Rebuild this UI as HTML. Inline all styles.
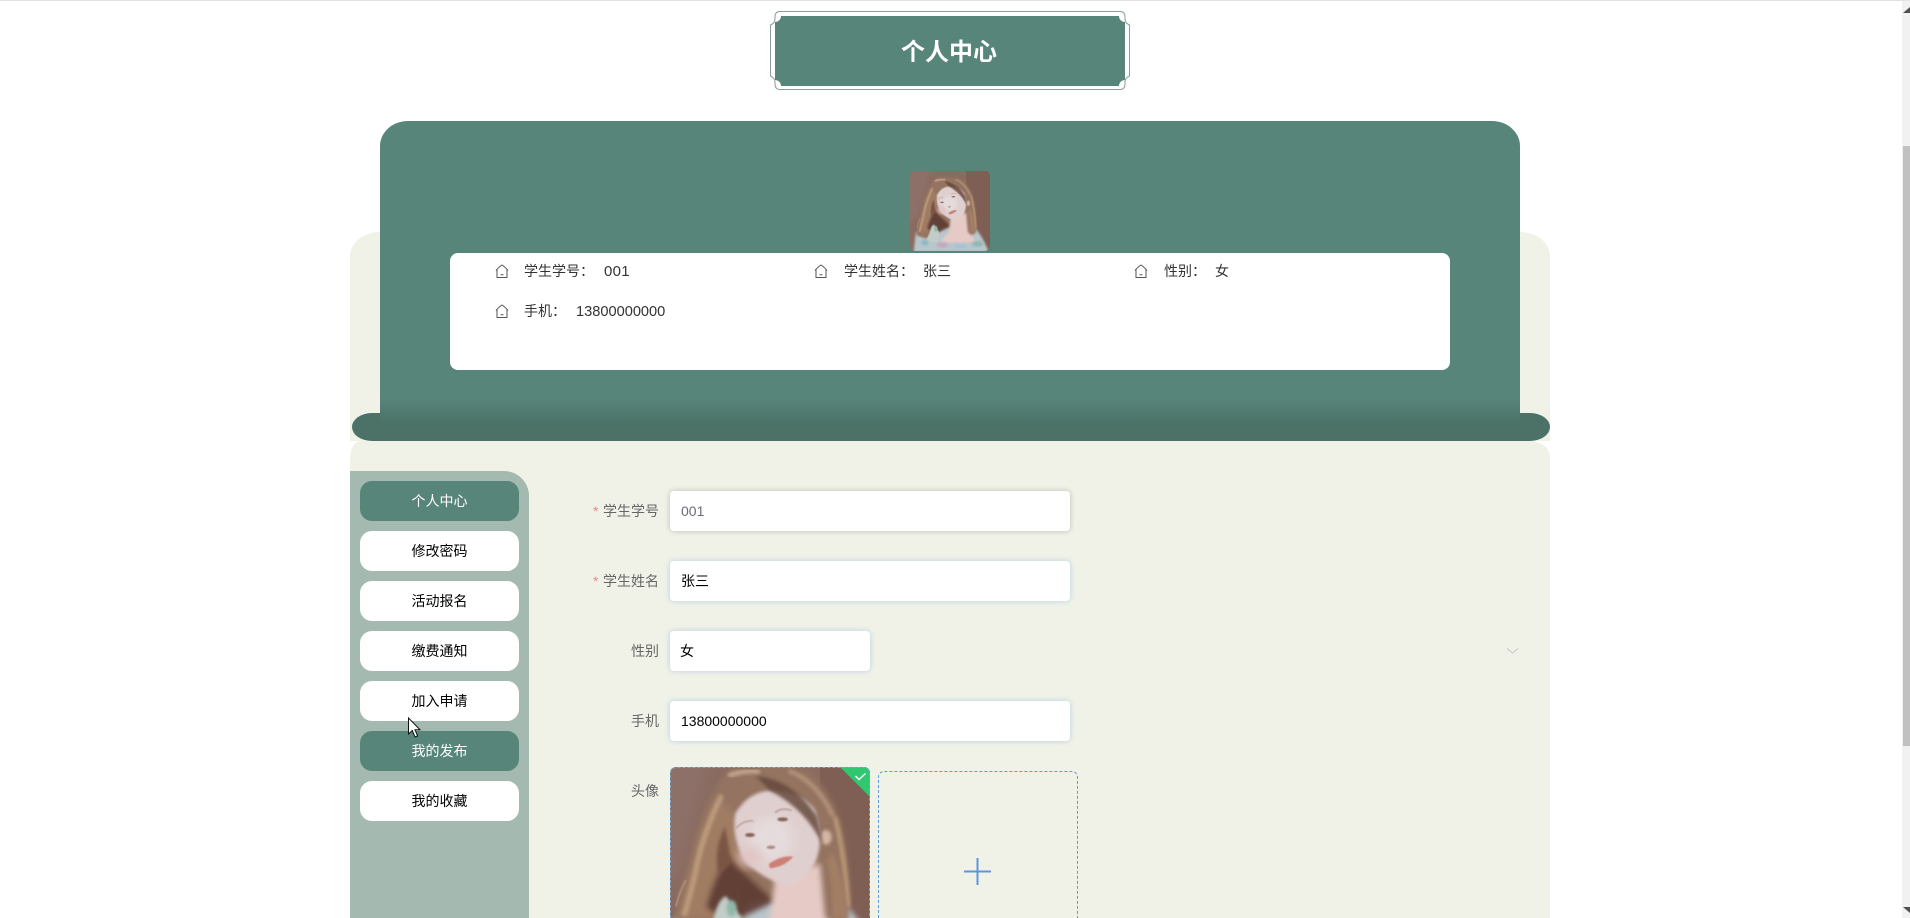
<!DOCTYPE html>
<html lang="zh-CN">
<head>
<meta charset="utf-8">
<title>个人中心</title>
<style>
html,body{margin:0;padding:0;width:1910px;height:918px;overflow:hidden;background:#fff;}
body{position:relative;font-family:"Liberation Sans","Noto Sans CJK SC",sans-serif;font-size:14px;color:#333;}
.a{position:absolute;}
.t{position:absolute;white-space:nowrap;line-height:20px;height:20px;}
.info{color:#333;letter-spacing:.3px;}
.nav{position:absolute;left:360px;width:159px;height:40px;border-radius:12px;background:#fff;color:#000;text-align:center;line-height:40px;font-size:14px;}
.nav.on{background:#58857a;color:#fff;}
.lab{position:absolute;right:1251px;color:#666;white-space:nowrap;line-height:20px;}
.star{position:absolute;left:593px;color:#e08a8a;line-height:20px;}
.inp{position:absolute;left:670px;width:400px;height:40px;background:#fff;border-radius:4px;box-shadow:0 0 6px rgba(90,150,210,.38);line-height:40px;color:#000;box-sizing:border-box;padding-left:11px;}
</style>
</head>
<body>
<div class="a" style="left:0;top:0;width:1910px;height:1px;background:#e2e2e2"></div>

<!-- title -->
<svg class="a" style="left:770px;top:11px" width="360" height="80" viewBox="0 0 360 80">
<path d="M10 .5H350Q355 .5 355 6V8Q355 12 359.500 14V65Q355 67 355 71V73Q355 78.500 350 78.500H10Q5 78.500 5 73V71Q5 67 .5 65V14Q5 12 5 8V6Q5 .5 10 .5Z" fill="#fff" stroke="#8b9c99" stroke-width="1"/>
<path d="M11 5H349A6 6 0 0 0 355 11V69A6 6 0 0 0 349 75H11A6 6 0 0 0 5 69V11A6 6 0 0 0 11 5Z" fill="#58857a"/>
</svg>
<div class="t" style="left:901px;top:37px;width:96px;height:32px;line-height:32px;font-size:24px;font-weight:bold;color:#fff;text-align:center">个人中心</div>

<!-- back panels -->
<div class="a" style="left:350px;top:232px;width:1200px;height:209px;background:#f0f2e8;border-radius:30px 30px 0 0/24px 24px 0 0"></div>
<div class="a" style="left:350px;top:441px;width:1200px;height:477px;background:#f0f2e8;border-radius:10px 20px 0 0/18px 16px 0 0"></div>
<div class="a" style="left:352px;top:413px;width:1198px;height:28px;background:#4c7268;border-radius:20px/14px"></div>
<div class="a" style="left:380px;top:121px;width:1140px;height:320px;border-radius:28px 28px 0 0/25px 25px 0 0;background:linear-gradient(to bottom,#58857a 0,#58857a 276px,#4c7268 302px,#4c7268 100%)"></div>

<!-- shared picture -->
<svg width="0" height="0" style="position:absolute">
<defs>
<filter id="b2" x="-30%" y="-30%" width="160%" height="160%"><feGaussianBlur stdDeviation="2.500"/></filter>
<filter id="b5" x="-30%" y="-30%" width="160%" height="160%"><feGaussianBlur stdDeviation="5"/></filter>
<filter id="b8" x="-30%" y="-30%" width="160%" height="160%"><feGaussianBlur stdDeviation="9"/></filter>
<filter id="b14" x="-30%" y="-30%" width="160%" height="160%"><feGaussianBlur stdDeviation="14"/></filter>
<g id="scene">
<rect x="-60" y="-80" width="800" height="780" fill="#8a6b60"/>
<rect x="480" y="-80" width="260" height="780" fill="#7f5e53"/>
<path d="M-60 -80H170L60 330L-60 430Z" fill="#8d7067" filter="url(#b14)"/>
<!-- light dress -->
<path d="M40 480Q200 410 330 420L560 440Q620 500 680 640H20Z" fill="#b9c6cc" filter="url(#b8)"/>
<!-- hair base -->
<path d="M215 25Q330 5 440 35Q530 100 555 250Q575 370 565 480L470 520L300 400L140 530L45 500Q60 380 100 270Q130 110 215 25Z" fill="#947360" filter="url(#b8)"/>
<path d="M170 110Q110 220 95 320Q70 400 55 474L250 474L260 200Z" fill="#a07c64" filter="url(#b8)"/>
<!-- highlights -->
<path d="M205 48Q255 28 300 35" fill="none" stroke="#c9ae96" stroke-width="16" opacity=".8" filter="url(#b5)"/>
<path d="M385 32Q470 62 520 170" fill="none" stroke="#bd9d84" stroke-width="14" opacity=".7" filter="url(#b5)"/>
<path d="M525 170Q555 290 565 440" fill="none" stroke="#c4a27c" stroke-width="14" opacity=".75" filter="url(#b5)"/>
<path d="M185 105Q125 230 108 330Q92 400 72 468" fill="none" stroke="#c8a985" stroke-width="16" opacity=".7" filter="url(#b5)"/>
<path d="M78 360Q56 400 48 440" fill="none" stroke="#dcc8a8" stroke-width="3" opacity=".7" filter="url(#b2)"/>
<path d="M500 300Q522 390 515 474L560 474Q560 380 520 280Z" fill="#a27e65" filter="url(#b5)"/>
<!-- dark lower hair -->
<path d="M205 290Q165 350 140 440Q180 480 250 470L345 425Q270 360 205 290Z" fill="#5d3b33" opacity=".92" filter="url(#b8)"/>
<path d="M195 200Q160 270 175 340L215 310Z" fill="#7a5445" filter="url(#b5)"/>
<!-- neck and chest -->
<path d="M345 355L480 310L495 470L580 560H250L330 470Z" fill="#e6cac5" filter="url(#b8)"/>
<!-- face -->
<path d="M226 160Q270 88 345 92Q425 98 465 150Q495 240 465 310Q430 372 385 380Q320 362 262 312Q212 240 226 160Z" fill="#e0cfcf" filter="url(#b5)"/>
<ellipse cx="335" cy="235" rx="65" ry="65" fill="#e5dbdc" filter="url(#b14)"/>
<ellipse cx="270" cy="290" rx="35" ry="28" fill="#e2c5c4" filter="url(#b14)"/>
<ellipse cx="498" cy="232" rx="17" ry="22" fill="#d3b5a3" filter="url(#b5)"/>
<!-- fringe -->
<path d="M288 48Q400 60 470 168Q482 215 488 255Q440 150 330 92Z" fill="#66493d" opacity=".85" filter="url(#b5)"/>
<!-- brows / eyes / nose / lips -->
<path d="M228 205Q250 180 280 183" fill="none" stroke="#b09590" stroke-width="4" filter="url(#b2)"/>
<path d="M345 158Q368 140 395 152" fill="none" stroke="#b09590" stroke-width="4" filter="url(#b2)"/>
<ellipse cx="270" cy="225" rx="15" ry="6" fill="#866659" filter="url(#b2)"/>
<ellipse cx="368" cy="178" rx="16" ry="6" fill="#866659" filter="url(#b2)"/>
<ellipse cx="333" cy="262" rx="13" ry="5" fill="#ad8a80" filter="url(#b2)"/>
<path d="M326 312Q365 285 400 290Q375 320 330 325Z" fill="#cd8076" filter="url(#b2)"/>
<!-- dress detail -->
<path d="M160 480Q172 420 198 408L245 474L230 560H120Z" fill="#c2ccc8" filter="url(#b5)"/>
<ellipse cx="215" cy="445" rx="15" ry="24" fill="#8fb8a9" filter="url(#b5)"/>
<ellipse cx="120" cy="560" rx="34" ry="24" fill="#8fb7c6" filter="url(#b8)"/>
<ellipse cx="430" cy="590" rx="60" ry="24" fill="#a9c3d4" filter="url(#b8)"/>
<ellipse cx="270" cy="580" rx="50" ry="24" fill="#c5a8bc" filter="url(#b8)"/>
<ellipse cx="580" cy="570" rx="50" ry="24" fill="#8fb7b4" filter="url(#b8)"/>
</g>
</defs>
</svg>

<!-- avatar -->
<div class="a" style="left:910px;top:171px;width:80px;height:80px;border-radius:5px;overflow:hidden">
<svg width="80" height="80" viewBox="-11 -37 700 667" preserveAspectRatio="none" style="display:block"><use href="#scene"/></svg>
</div>

<!-- info card -->
<div class="a" style="left:450px;top:253px;width:1000px;height:117px;background:#fff;border-radius:8px"></div>
<svg class="a" style="left:495px;top:264px" width="14" height="15" viewBox="0 0 14 15"><path d="M1 6.500Q4.500 2.500 7 1Q9.500 2.500 13 6.500M2 5.500V13.500H12V5.500M5.500 10.800H8.500" fill="none" stroke="#555" stroke-width="1"/></svg>
<svg class="a" style="left:814px;top:264px" width="14" height="15" viewBox="0 0 14 15"><path d="M1 6.500Q4.500 2.500 7 1Q9.500 2.500 13 6.500M2 5.500V13.500H12V5.500M5.500 10.800H8.500" fill="none" stroke="#555" stroke-width="1"/></svg>
<svg class="a" style="left:1134px;top:264px" width="14" height="15" viewBox="0 0 14 15"><path d="M1 6.500Q4.500 2.500 7 1Q9.500 2.500 13 6.500M2 5.500V13.500H12V5.500M5.500 10.800H8.500" fill="none" stroke="#555" stroke-width="1"/></svg>
<svg class="a" style="left:495px;top:304px" width="14" height="15" viewBox="0 0 14 15"><path d="M1 6.500Q4.500 2.500 7 1Q9.500 2.500 13 6.500M2 5.500V13.500H12V5.500M5.500 10.800H8.500" fill="none" stroke="#555" stroke-width="1"/></svg>
<div class="t info" style="left:524px;top:261px;letter-spacing:0">学生学号：</div>
<div class="t info" style="left:604px;top:262px;font-size:15px">001</div>
<div class="t info" style="left:844px;top:261px;letter-spacing:0">学生姓名：</div>
<div class="t info" style="left:923px;top:261px;letter-spacing:0">张三</div>
<div class="t info" style="left:1164px;top:261px;letter-spacing:0">性别：</div>
<div class="t info" style="left:1215px;top:261px;letter-spacing:0">女</div>
<div class="t info" style="left:524px;top:301px;letter-spacing:0">手机：</div>
<div class="t info" style="left:576px;top:302px;letter-spacing:0;font-size:14.600px">13800000000</div>

<!-- sidebar -->
<div class="a" style="left:350px;top:471px;width:179px;height:447px;background:#a4b9af;border-radius:0 25px 0 0"></div>
<div class="nav on" style="top:481px">个人中心</div>
<div class="nav" style="top:531px">修改密码</div>
<div class="nav" style="top:581px">活动报名</div>
<div class="nav" style="top:631px">缴费通知</div>
<div class="nav" style="top:681px">加入申请</div>
<div class="nav on" style="top:731px">我的发布</div>
<div class="nav" style="top:781px">我的收藏</div>

<!-- form -->
<div class="star" style="top:501px">*</div>
<div class="lab" style="top:501px">学生学号</div>
<div class="inp" style="top:491px;color:#6b6b78;box-shadow:0 0 6px rgba(0,0,0,.22)">001</div>
<div class="star" style="top:571px">*</div>
<div class="lab" style="top:571px">学生姓名</div>
<div class="inp" style="top:561px">张三</div>
<div class="lab" style="top:641px">性别</div>
<div class="inp" style="top:631px;width:200px;padding-left:10px">女</div>
<svg class="a" style="left:1506px;top:647px" width="13" height="8" viewBox="0 0 13 8"><path d="M1 1.500L6.500 6L12 1.500" fill="none" stroke="#c4c8c6" stroke-width="1"/></svg>
<div class="lab" style="top:711px">手机</div>
<div class="inp" style="top:701px">13800000000</div>
<div class="lab" style="top:781px">头像</div>

<!-- uploaded picture: dashed frame is drawn so it runs off the visible area -->
<svg class="a" style="left:670px;top:767px" width="200" height="151" viewBox="0 0 200 151">
<defs><clipPath id="pc"><path d="M6 0H194A6 6 0 0 1 200 6V151H0V6A6 6 0 0 1 6 0Z"/></clipPath></defs>
<g clip-path="url(#pc)">
<svg x="0" y="0" width="200" height="151" viewBox="30 21 600 453" preserveAspectRatio="none"><use href="#scene"/></svg>
<path d="M170 0H200V30Z" fill="#2fc871"/>
<path d="M185.500 9L189 12.500L195.500 6.500" fill="none" stroke="#fff" stroke-width="1.500"/>
</g>
<path d="M.5 151V6A5.500 5.500 0 0 1 6 .5H194A5.500 5.500 0 0 1 199.500 6V151" fill="none" stroke="#7fa6cf" stroke-width="1" stroke-dasharray="3 2"/>
</svg>

<!-- upload box -->
<svg class="a" style="left:878px;top:771px" width="200" height="147" viewBox="0 0 200 147">
<path d="M.5 147V6A5.500 5.500 0 0 1 6 .5H194A5.500 5.500 0 0 1 199.500 6V147" fill="none" stroke="#5f9bdc" stroke-width="1" stroke-dasharray="3 2"/>
<path d="M99.500 87V114M86 100.500H113" fill="none" stroke="#5b97de" stroke-width="2"/>
</svg>

<!-- cursor -->
<svg class="a" style="left:407px;top:717px" width="15" height="22" viewBox="0 0 15 22"><path d="M1.500 1V17L5.300 13.500L8 20L10.600 19L8 12.800H13Z" fill="#fff" stroke="#111" stroke-width="1"/></svg>

<!-- scrollbar -->
<div class="a" style="left:1902px;top:1px;width:8px;height:917px;background:#f1f1f1"></div>
<div class="a" style="left:1903px;top:146px;width:7px;height:600px;background:#c1c1c1"></div>
<svg class="a" style="left:1902px;top:6px" width="8" height="8" viewBox="0 0 8 8"><path d="M1 7L8 1V7Z" fill="#505050"/></svg>
<svg class="a" style="left:1902px;top:906px" width="8" height="8" viewBox="0 0 8 8"><path d="M1 1H8V7Z" fill="#505050"/></svg>
</body>
</html>
